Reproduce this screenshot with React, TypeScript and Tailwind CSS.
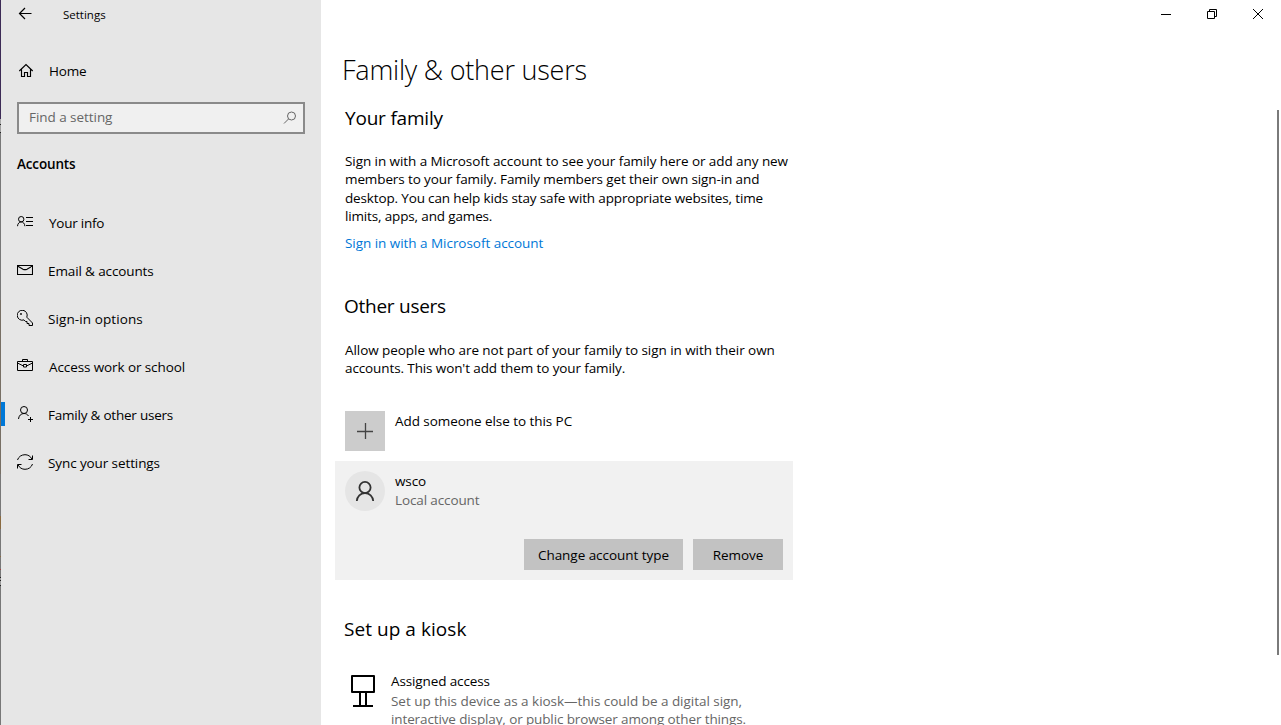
import type { ReactNode } from 'react';

type IconProps = { children: ReactNode; className?: string; size?: number; stroke?: number };

function Icon({ children, className = '', size = 16, stroke = 1 }: IconProps) {
  return (
    <svg width={size} height={size} viewBox={`0 0 ${size} ${size}`} fill="none" stroke="currentColor" strokeWidth={stroke} className={`shrink-0 ${className}`}>
      {children}
    </svg>
  );
}

const navItems: { label: string; text: string; icon: ReactNode; active?: boolean }[] = [
  {
    label: 'Your info',
    text: 'ml-4 tracking-[-0.25px]',
    icon: (
      <>
        <circle cx="4.2" cy="5.2" r="2.7" />
        <path d="M.5 12.2C.7 9.6 2.2 7.9 4.2 7.9s3.5 1.7 3.700 4.3M9 3.500h7M9 7.500h7M9 11.500h7" />
      </>
    ),
  },
  {
    label: 'Email & accounts',
    text: 'ml-[15px] tracking-[-0.12px]',
    icon: <path d="M.5 3.500h15v9H.5zM.5 4 6 7.200c1.500.7 2.500.7 4 0L15.500 4" stroke-width="1.100" />,
  },
  {
    label: 'Sign-in options',
    text: 'ml-[15px] tracking-[0.1px]',
    icon: (
      <>
        <path d="M9.800 7.200a5 5 0 1 0-2.800 2.700l1.500 1.600H10v2h2v2h3.500V13z" />
        <circle cx="4" cy="4" r=".9" fill="currentColor" stroke="none" />
      </>
    ),
  },
  {
    label: 'Access work or school',
    text: 'ml-4 tracking-[-0.1px]',
    icon: <path d="M.5 3.500h15v9H.5zM5.500 3.500v-2h5v2M.5 5l6 3M9.500 8l6-3M6.500 6.500h3v2.500h-3z" />,
  },
  {
    label: 'Family & other users',
    text: 'ml-[15px] tracking-[-0.22px]',
    active: true,
    icon: (
      <>
        <circle cx="7" cy="4" r="3.500" />
        <path d="M1.500 13c.3-3.300 2.500-5.500 5.500-5.500 2 0 3.500.9 4.500 2.500M13.500 11v5M11 13.500h5" />
      </>
    ),
  },
  {
    label: 'Sync your settings',
    text: 'ml-[15px] tracking-[-0.1px]',
    icon: <path d="M.5 6C1.500 2.800 4.400.7 8 .7c3 0 5.500 1.500 6.900 4.300M15.500 1.500v4h-4M15.500 10c-1 3.200-3.900 5.300-7.500 5.300-3 0-5.500-1.500-6.900-4.300M.5 14.500v-4h4" />,
  },
];

function Sidebar() {
  return (
    <aside className="flex w-80 shrink-0 flex-col bg-[#e6e6e6]">
      <div className="flex h-[29px] items-center pl-4">
        <Icon className="-mt-px">
          <path d="M14.500 7.500H2.700M8 2 2.500 7.500 8 13" strokeWidth="1.200" />
        </Icon>
        <span className="ml-[30px] text-[11.5px]">Settings</span>
      </div>
      <div className="mt-[18px] flex h-12 items-center pl-[17px]">
        <Icon>
          <path d="M1.300 8 8 1.500 14.700 8M3.500 6.500v7h3v-4h3v4h3v-7" strokeWidth="1.150" />
        </Icon>
        <span className="ml-[15px] tracking-[-0.2px]">Home</span>
      </div>
      <div className="mt-[7px] ml-4 flex h-8 w-[288px] items-center justify-between border-2 border-[#8a8a8a] bg-[#f0f0f0] pr-[5px] pl-[10px] text-[#666]">
        <span className="-mt-px tracking-[-0.05px]">Find a setting</span>
        <Icon>
          <circle cx="9.500" cy="6" r="4" />
          <path d="M6.500 9 2 13.500" />
        </Icon>
      </div>
      <h2 className="mt-5 ml-4 leading-5 font-semibold tracking-[-0.15px]">Accounts</h2>
      <nav className="mt-[25px]">
        {navItems.map((item) => (
          <a key={item.label} className="flex h-12 items-center">
            <span className={item.active ? '-mt-0.5 mr-3 h-6 w-1 bg-[#0078d7]' : 'mr-3 h-6 w-1'} />
            <Icon className="-mt-0.5">{item.icon}</Icon>
            <span className={item.text}>{item.label}</span>
          </a>
        ))}
      </nav>
    </aside>
  );
}

function WindowControls() {
  return (
    <div className="flex h-7 justify-end">
      <div className="flex w-[46px] items-center justify-center">
        <Icon size={10}><path d="M0 5.500h10" /></Icon>
      </div>
      <div className="flex w-[46px] items-center justify-center">
        <Icon size={10}><path d="M.5 2.500h7v7h-7zM2.500 2.500v-2h7v7h-2" /></Icon>
      </div>
      <div className="flex w-[46px] items-center justify-center">
        <Icon size={10}><path d="m0 0 10 10M10 0 0 10" /></Icon>
      </div>
    </div>
  );
}

export default function App() {
  return (
    <div className="flex h-[725px] w-[1281px] overflow-hidden bg-white font-['Open_Sans',sans-serif] text-[13.5px] whitespace-nowrap text-black">
      <div className="w-px shrink-0 bg-[linear-gradient(to_bottom,#3d2b56_0_119px,#a9a9a9_119px_124px,#222_124px_125px,#a0a0a0_125px_132px,#222_132px_133px,#777_133px_300px,#776f64_300px_474px,#777_474px_516px,#8a6a40_516px_529px,#777_529px_556px,#8a6a40_556px_557px,#777_557px_569px,#a04040_569px_570px,#777_570px_577px,#222_577px_578px,#999_578px_580px,#222_580px_581px,#999_581px_585px,#222_585px_586px,#777_586px)]" />
      <Sidebar />
      <div className="flex min-w-0 flex-1 flex-col">
        <WindowControls />
        <div className="flex min-h-0 flex-1 justify-between">
          <main className="flex w-[480px] flex-col pl-[14px]">
            <h1 className="mt-[22px] ml-[7px] text-[27px] leading-10 font-light tracking-[-0.22px]">Family &amp; other users</h1>
            <section className="mt-[14px] ml-[10px] flex flex-col">
              <h2 className="text-[19px] leading-7 tracking-[-0.2px]">Your family</h2>
              <p className="mt-5 flex flex-col leading-[18.33px]">
                <span className="tracking-[-0.07px]">Sign in with a Microsoft account to see your family here or add any new</span>
                <span className="tracking-[-0.11px]">members to your family. Family members get their own sign-in and</span>
                <span className="tracking-[-0.15px]">desktop. You can help kids stay safe with appropriate websites, time</span>
                <span className="tracking-[-0.15px]">limits, apps, and games.</span>
              </p>
              <a className="mt-2 leading-5 tracking-[-0.04px] text-[#0078d7]">Sign in with a Microsoft account</a>
            </section>
            <section className="mt-[39px] ml-[9px] flex flex-col">
              <h2 className="text-[19px] leading-7 tracking-[-0.26px]">Other users</h2>
              <p className="mt-[21px] ml-px flex flex-col leading-[18px]">
                <span className="tracking-[-0.06px]">Allow people who are not part of your family to sign in with their own</span>
                <span className="tracking-[-0.11px]">accounts. This won&apos;t add them to your family.</span>
              </p>
            </section>
            <div className="mt-[34px] ml-[10px] flex gap-[10px]">
              <div className="flex size-10 items-center justify-center bg-[#ccc] text-[#444]">
                <Icon stroke={1.3}><path d="M0 8.500h16M8.500 0v16" /></Icon>
              </div>
              <span className="leading-5 tracking-[-0.06px]">Add someone else to this PC</span>
            </div>
            <section className="mt-[10px] flex h-[119px] w-[458px] shrink-0 flex-col justify-between bg-[#f1f1f1] p-[10px]">
              <div className="flex gap-[10px]">
                <div className="flex size-10 items-center justify-center rounded-full bg-[#e5e5e5] text-[#333]">
                  <Icon size={20} stroke={1.8}>
                    <circle cx="10" cy="6.500" r="5.600" />
                    <path d="M1.800 20c.3-4.700 3.700-7.900 8.200-7.900s7.900 3.200 8.200 7.900" />
                  </Icon>
                </div>
                <div className="flex flex-col">
                  <span className="leading-5 tracking-[-0.1px]">wsco</span>
                  <span className="leading-[18px] tracking-[-0.12px] text-[#666]">Local account</span>
                </div>
              </div>
              <div className="flex justify-end gap-[10px]">
                <button className="h-[31px] w-[159px] bg-[#c2c2c2] tracking-[-0.04px]">Change account type</button>
                <button className="h-[31px] w-[90px] bg-[#c2c2c2] tracking-[-0.1px]">Remove</button>
              </div>
            </section>
            <section className="mt-[35px] ml-[9px] flex flex-col">
              <h2 className="text-[19px] leading-7 tracking-[0.05px]">Set up a kiosk</h2>
              <div className="mt-7 ml-[7px] flex">
                <svg width="24" height="36" viewBox="0 0 24 36" fill="none" stroke="currentColor" strokeWidth="2" strokeLinejoin="round" className="mt-1 shrink-0">
                  <path d="M1 1h22v16H1zM9 17v14M15 17v14M2 31h20" />
                </svg>
                <div className="ml-4 flex flex-col">
                  <span className="leading-5 tracking-[-0.12px]">Assigned access</span>
                  <span className="leading-5 tracking-[-0.03px] text-[#666]">Set up this device as a kiosk—this could be a digital sign,</span>
                  <span className="leading-4 tracking-[-0.12px] text-[#666]">interactive display, or public browser among other things.</span>
                </div>
              </div>
            </section>
          </main>
          <div className="mt-[82px] mr-[2px] h-[545px] w-0.5 bg-[#7a7a7a]" />
        </div>
      </div>
    </div>
  );
}
